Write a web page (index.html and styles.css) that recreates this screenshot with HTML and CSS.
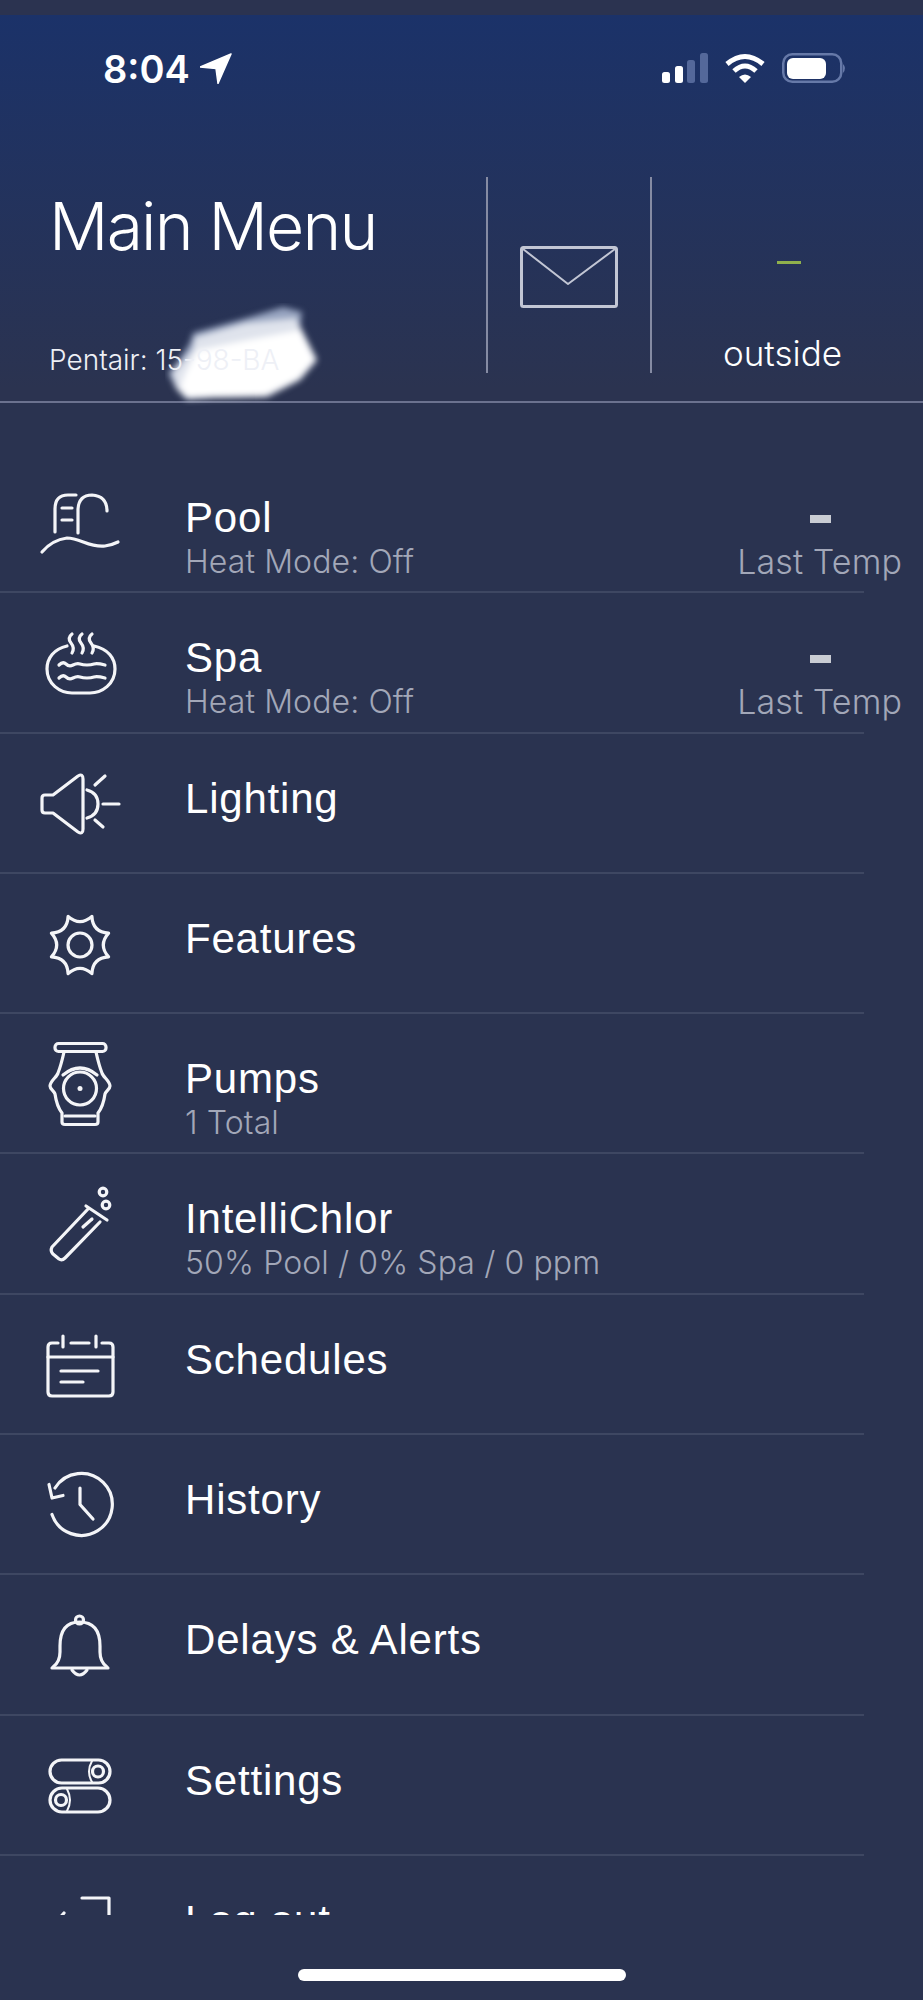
FILE: index.html
```html
<!DOCTYPE html>
<html lang="en">
<head>
<meta charset="utf-8">
<title>Main Menu</title>
<link rel="stylesheet" href="styles.css">
</head>
<body>
<div class="screen">
  <div class="top-strip"></div>
  <header class="header">
    <div class="status">
      <div class="status-left">
        <span class="time">8:04</span>
        <svg class="loc" width="32" height="31" viewBox="199 54 32 31"><path d="M230 55 L199 68 L215 69.500 L217 84.500 Z" fill="#fff" stroke="#fff" stroke-width="1.500" stroke-linejoin="round"/></svg>
      </div>
      <div class="status-right">
        <svg width="46" height="30" viewBox="0 0 46 30">
          <rect x="0" y="19" width="8" height="11" rx="2.500" fill="#fff"/>
          <rect x="13" y="13" width="8" height="17" rx="2.500" fill="#fff"/>
          <rect x="25" y="7" width="8" height="23" rx="2.500" fill="#54689a"/>
          <rect x="38" y="0" width="8" height="30" rx="2.500" fill="#54689a"/>
        </svg>
        <svg width="40" height="30" viewBox="0 0 40 30" fill="none" stroke="#fff" stroke-width="5">
          <path d="M2 11 Q20 -4 38 11"/>
          <path d="M9 18 Q20 8 31 18"/>
          <path d="M14 24 Q20 19 26 24 L20 30 Z" fill="#fff" stroke="none"/>
        </svg>
        <svg width="65" height="30" viewBox="0 0 65 30">
          <rect x="1.250" y="1.250" width="58" height="27.500" rx="9" fill="none" stroke="#6679a8" stroke-width="2.500"/>
          <rect x="5" y="5" width="39" height="21" rx="6" fill="#fff"/>
          <path d="M61 11 Q65 15 61 20 Z" fill="#6679a8"/>
        </svg>
      </div>
    </div>
    <div class="head-row">
      <div class="title-col">
        <h1 class="title">Main Menu</h1>
        <p class="device">Pentair: 15-98-BA</p>
        <svg class="smudge" width="160" height="105" viewBox="165 303 160 105">
          <g class="smudge-blur">
            <path d="M190 343 L193 333 L240 320 L283 307 L302 312 L300 327 L317 360 L300 380 L267 397 L213 398 L187 400 L177 390 L168 373 L177 363 Z" fill="#97a4c0"/>
            <path d="M192 350 L195 337 L245 323 L296 318 L302 330 L317 360 L300 380 L267 397 L213 398 L187 399 L176 388 L172 373 L180 364 Z" fill="#dfe3ec"/>
            <path d="M197 350 L247 340 L300 330 L315 360 L298 379 L265 395 L213 396 L187 397 L180 388 L184 376 Z" fill="#fff"/>
          </g>
        </svg>
      </div>
      <div class="mail-col">
        <svg width="98" height="62" viewBox="0 0 98 62" fill="none" stroke="#c2c6d4" stroke-linejoin="round">
          <rect x="1.500" y="1.500" width="95" height="59" rx="2" stroke-width="3"/>
          <path d="M3 3 L48 38 L95 3" stroke-width="2"/>
        </svg>
      </div>
      <div class="temp-col">
        <span class="green-dash"></span>
        <span class="outside">outside</span>
      </div>
    </div>
  </header>
  <main class="list">
    <div class="row">
      <svg class="icon" viewBox="10 15 130 110"><path d="M42 100 Q52 88 67 86 C80 86 90 96 105 94 Q112 93 118 90"/><path d="M55 80 V57 Q55 43 68 43 H76"/><path d="M78 81 V57 Q79 43 92 43 Q107 44 107 59"/><path d="M62 56 H72 M62 68 H72"/></svg>
      <div class="text"><div class="name">Pool</div><div class="sub">Heat Mode: Off</div></div>
      <div class="temp"><span class="dash"></span><span class="sub temp-label">Last Temp</span></div>
    </div>
    <div class="row">
      <svg class="icon" viewBox="10 15 130 110"><path d="M67 54 C54 57 47 66 47 77 C47 92 60 101 72 101 H90 C102 101 115 92 115 77 C115 66 108 57 94 54"/><path d="M59 73 Q63 69 66 72 T73 73 T80 72 T87 73 T94 72 T105 73"/><path d="M59 86 Q63 82 66 85 T73 86 T80 85 T87 86 T94 85 T105 86"/><path d="M72 42 Q67 46 71 51 T72 61 M82 42 Q77 46 81 51 T82 61 M92 42 Q87 46 91 51 T92 61"/></svg>
      <div class="text"><div class="name">Spa</div><div class="sub">Heat Mode: Off</div></div>
      <div class="temp"><span class="dash"></span><span class="sub temp-label">Last Temp</span></div>
    </div>
    <div class="row">
      <svg class="icon" viewBox="10 15 130 110"><path d="M45 62 H53 L78 43 Q83 40 83 46 V96 Q83 102 78 99 L53 80 H45 Q42 80 42 77 V65 Q42 62 45 62 Z"/><path d="M87 57 Q98 60 98 71 Q98 82 87 85"/><path d="M95 52 L105 43 M103 71 H119 M95 87 L103 94"/></svg>
      <div class="text"><div class="name">Lighting</div></div>
    </div>
    <div class="row">
      <svg class="icon" viewBox="10 15 130 110"><path d="M91.900 43.400 Q92.700 59.300 108.600 60.100 Q98 72 108.600 83.900 Q92.700 84.700 91.900 100.600 Q80 90 68.100 100.600 Q67.300 84.700 51.400 83.900 Q62 72 51.400 60.100 Q67.300 59.300 68.100 43.400 Q80 54 91.900 43.400 Z"/><circle cx="80" cy="72" r="12"/></svg>
      <div class="text"><div class="name">Features</div></div>
    </div>
    <div class="row">
      <svg class="icon" viewBox="10 15 130 110"><rect x="55" y="30.500" width="51" height="8" rx="3.500"/><path d="M64 39 C62 48 60 55 58 60 C57 64 50 68 50 73 C50 76 54 78 55 81 C56 88 58 95 62 100 V109 Q62 111.500 65 111.500 H95 Q98 111.500 98 109 V100 C102 95 104 88 105 81 C106 78 110 76 110 73 C110 68 103 64 102 60 C100 55 98 48 96 39"/><circle cx="80" cy="75.500" r="16.500"/><path d="M63 62 Q80 48 97 62 M65 103 H95"/><circle class="fill" cx="80" cy="75.500" r="2.500"/></svg>
      <div class="text"><div class="name">Pumps</div><div class="sub">1 Total</div></div>
    </div>
    <div class="row">
      <svg class="icon" viewBox="10 15 130 110"><path d="M88 56 L52 94 Q50 98 53 101 L59 106 Q62 108 65 105 L100 69"/><path d="M86 53 L107 67"/><path d="M83 74 L92 66"/><circle cx="103" cy="39" r="3.800"/><circle cx="106" cy="52" r="3.800"/></svg>
      <div class="text"><div class="name">IntelliChlor</div><div class="sub">50% Pool / 0% Spa / 0 ppm</div></div>
    </div>
    <div class="row">
      <svg class="icon" viewBox="10 15 130 110"><path d="M58 49 H52 Q48 49 48 53 V98 Q48 102 52 102 H109 Q113 102 113 98 V53 Q113 49 109 49 H102"/><path d="M71 49 H89 M48 63 H113 M63 42 V53 M96 42 V53 M61 77 H98 M61 88 H83"/></svg>
      <div class="text"><div class="name">Schedules</div></div>
    </div>
    <div class="row">
      <svg class="icon" viewBox="10 15 130 110"><path d="M52 80.500 A31 31 0 1 0 55 54"/><path d="M49 50.500 L52 64 L63 61.500 M80 54 V70.500 L93 85"/></svg>
      <div class="text"><div class="name">History</div></div>
    </div>
    <div class="row">
      <svg class="icon" viewBox="10 15 130 110"><circle cx="79.500" cy="46" r="4"/><path d="M53 93 Q60 88 60 78 V72 Q60 48 79.500 48 Q100 48 100 72 V78 Q100 88 107 93"/><path d="M52 94 H108"/><path d="M72 96 Q79.500 106 87 96"/></svg>
      <div class="text"><div class="name">Delays &amp; Alerts</div></div>
    </div>
    <div class="row">
      <svg class="icon" viewBox="10 15 130 110"><rect x="50" y="45" width="60" height="23" rx="11.500"/><rect x="50" y="73" width="60" height="24" rx="12"/><circle cx="98" cy="56.500" r="5.500"/><circle cx="61" cy="85" r="5.500"/><path d="M92 46 Q86 56.500 92 67 M67 74 Q73 85 67 96" class="thin"/></svg>
      <div class="text"><div class="name">Settings</div></div>
    </div>
    <div class="row">
      <svg class="icon" viewBox="10 15 130 110"><path d="M82 43 H109 V100 H82"/><path d="M64 58 L52 72 L64 86 M52 72 H92"/></svg>
      <div class="text"><div class="name">Log out</div></div>
    </div>
  </main>
  <footer class="bottom"><span class="home"></span></footer>
</div>
</body>
</html>
```
FILE: styles.css
```css
* { box-sizing: border-box; }
html, body { margin: 0; padding: 0; }
body { background: #2a3350; font-family: "Liberation Sans", Arial, sans-serif; color: #fff; }
.screen { width: 923px; height: 2000px; display: flex; flex-direction: column; overflow: hidden; }
.top-strip { height: 15px; background: #2b3350; flex: none; }
.header { flex: none; background: linear-gradient(#1b3269, #2b3350 97%); padding-bottom: 28px; border-bottom: 2px solid #6b728f; }
.status { height: 162px; padding: 38px 76px 0 103px; display: flex; justify-content: space-between; align-items: flex-start; }
.status-left { display: flex; align-items: center; gap: 10px; }
.time { font-family: Inter, "Liberation Sans", sans-serif; font-weight: 600; font-size: 38px; line-height: 30px; }
.status-right { display: flex; gap: 17px; align-items: flex-start; }
.head-row { height: 196px; display: flex; }
.title-col { width: 486px; padding-left: 49px; display: flex; flex-direction: column; justify-content: flex-end; position: relative; }
.title { margin: 0 0 auto; padding-top: 16px; font-family: Inter, sans-serif; font-weight: 300; font-size: 66px; line-height: 66px; letter-spacing: -1.800px; }
.device { margin: 0 0 -2px; position: relative; z-index: 1; font-family: Inter, sans-serif; font-weight: 300; font-size: 28px; line-height: 30px; color: #eef0f6; }
.smudge { position: absolute; left: 165px; top: 126px; }
.smudge-blur { filter: blur(3px); }
.mail-col { width: 166px; border-left: 2px solid #858ba3; border-right: 2px solid #858ba3; padding: 69px 0 0 32px; }
.temp-col { flex: 1; display: flex; flex-direction: column; align-items: center; padding: 84px 0 0; }
.green-dash { width: 24px; height: 3px; background: #8fb04c; margin: 0 0 auto 2px; }
.outside { font-family: Inter, sans-serif; font-weight: 300; font-size: 35px; line-height: 40px; margin-left: -10px; }
.list { flex: none; height: 1512px; padding-top: 50px; overflow: hidden; }
.row { width: 864px; height: 140.300px; flex: none; display: flex; align-items: flex-start; border-bottom: 2px solid #3e4762; }
.icon { width: 130px; height: 110px; margin: 14px 45px 0 10px; flex: none; fill: none; stroke: #f4f5f8; stroke-width: 3.200; stroke-linecap: round; stroke-linejoin: round; }
.icon .fill { fill: #f4f5f8; stroke: none; }
.icon .thin { stroke-width: 2; }
.text { padding-top: 43px; }
.name { font-size: 42px; line-height: 44px; letter-spacing: 0.800px; color: #fff; }
.sub { font-family: Inter, sans-serif; font-weight: 300; font-size: 32px; line-height: 44px; letter-spacing: 0.100px; color: #a2a7b8; white-space: nowrap; }
.temp-label { font-size: 34px; line-height: 40px; }
.temp { margin: 0 -38px 0 auto; padding-top: 62px; display: flex; flex-direction: column; align-items: flex-end; }
.dash { width: 21px; height: 8px; background: #c9ccd3; margin: 0 71px 19px 0; }
.bottom { flex: 1; display: flex; justify-content: center; padding-top: 54px; }
.home { width: 328px; height: 12px; border-radius: 6px; background: #fff; }
```
